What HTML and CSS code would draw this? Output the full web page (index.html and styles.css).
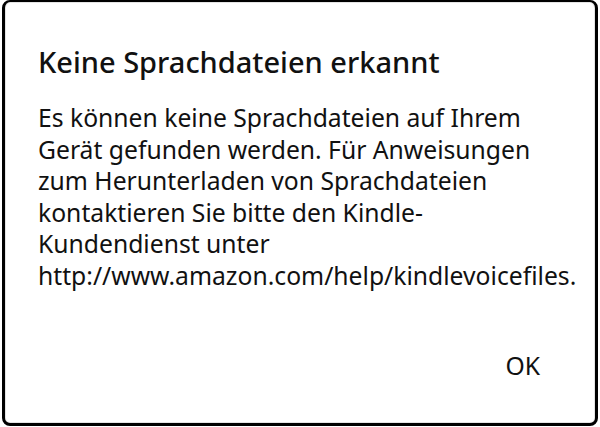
FILE: index.html
```html
<!DOCTYPE html>
<html lang="de">
<head>
  <meta charset="UTF-8" />
  <title>Keine Sprachdateien erkannt</title>
  <link rel="stylesheet" href="styles.css">
</head>
<body>

  <div class="dialog">
    <h2 class="title">Keine Sprachdateien erkannt</h2>
    <p class="message">
      Es können keine Sprachdateien auf Ihrem<br>
      Gerät gefunden werden. Für Anweisungen<br>
      zum Herunterladen von Sprachdateien<br>
      kontaktieren Sie bitte den Kindle-<br>
      Kundendienst unter<br>
      http://www.amazon.com/help/kindlevoicefiles.
    </p>
    <div class="actions">
      <button class="btn">OK</button>
    </div>
  </div>

</body>
</html>
```

FILE: styles.css
```css
html, body {
  margin: 0;
  height: 100%;
  background-color: #ffffff;
}
body {
  font-family: "Noto Sans", "Open Sans", sans-serif;
  color: #111;
  padding: 0 2px 1px 2px;
  box-sizing: border-box;
}
.dialog {
  height: 100%;
  box-sizing: border-box;
  border: 3px solid #000;
  border-top-width: 2px;
  border-radius: 8px;
  box-shadow: inset 0 0 0 1px #e4e4e4;
  padding: 0 20px 0 33px;
  display: flex;
  flex-direction: column;
}
.title {
  margin: 42px 0 0 0;
  font-size: 29px;
  font-weight: 500;
  line-height: 36px;
}
.message {
  margin: 22px 0 0 0;
  font-size: 24.7px;
  line-height: 31.6px;
}
.actions {
  display: flex;
  justify-content: flex-end;
  margin-top: 58px;
}
.btn {
  font-family: inherit;
  font-size: 24.7px;
  line-height: 32px;
  color: #111;
  background: none;
  border: none;
  padding: 0 35px 0 0;
}
```
